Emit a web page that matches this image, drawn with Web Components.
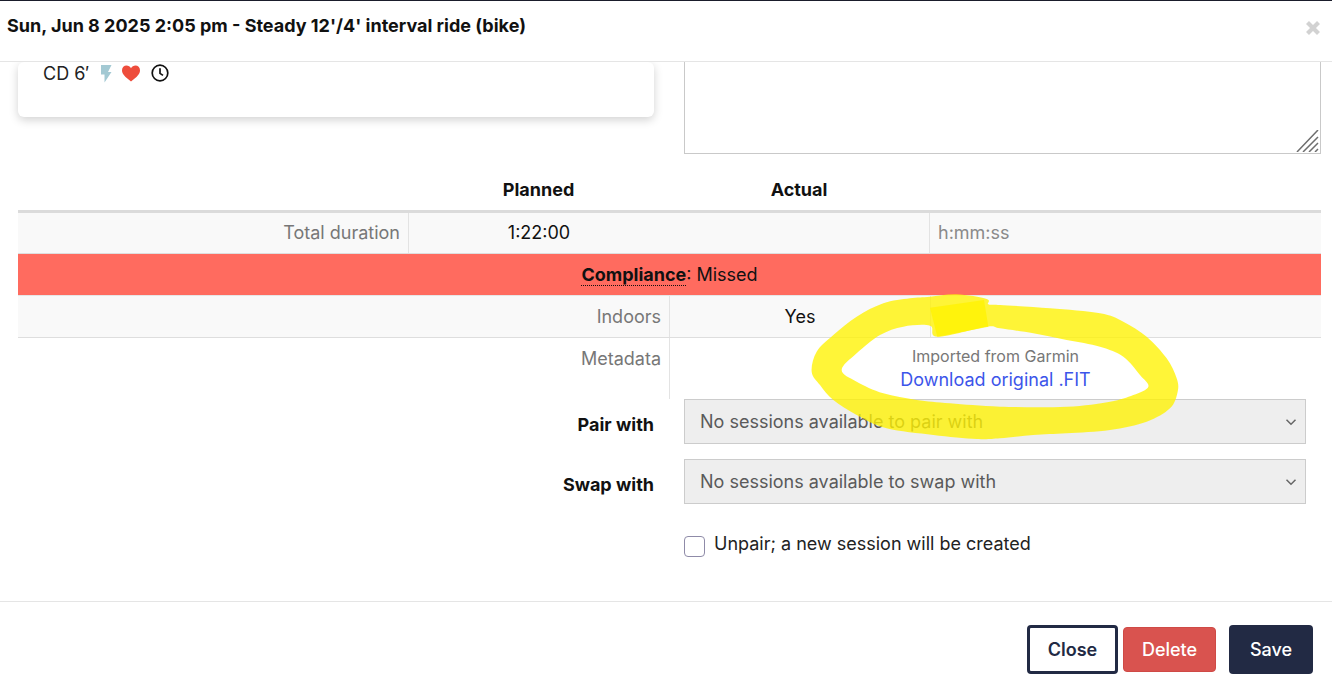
<!DOCTYPE html>
<html><head><meta charset="utf-8"><title>Session</title>
<style>
html,body{margin:0;height:100%;overflow:hidden;background:#fff}
body{font:18px/1.5 Inter,"Liberation Sans",sans-serif;color:#111}
</style></head><body>
<session-modal>
<modal-header slot="header">Sun, Jun 8 2025 2:05 pm - Steady 12'/4' interval ride (bike)</modal-header>
<top-panels></top-panels>
<data-table></data-table>
<select-row label="Pair with" text="No sessions available to pair with"></select-row>
<select-row label="Swap with" text="No sessions available to swap with"></select-row>
<unpair-check>Unpair; a new session will be created</unpair-check>
<modal-footer slot="footer"></modal-footer>
<yellow-scribble slot="overlay"></yellow-scribble>
</session-modal>
<script>
function def(name,html,init){customElements.define(name,class extends HTMLElement{constructor(){super();this.attachShadow({mode:'open'}).innerHTML=html;}connectedCallback(){if(init)init(this,this.shadowRoot);}});}
def('session-modal',`<style>:host{display:flex;flex-direction:column;position:relative;height:690px;width:1332px;overflow:hidden;background:#fff}
.body{flex:1;min-height:0;overflow:hidden;padding:0 0 0 18px;display:flex;flex-direction:column}
</style><slot name="header"></slot><div class="body"><slot></slot></div><slot name="footer"></slot><slot name="overlay"></slot>`);
def('modal-header',`<style>:host{display:flex;box-sizing:border-box;height:62px;border-top:1px solid #1a1d2b;border-bottom:1px solid #e5e5e5;padding:12px 7px 0;justify-content:space-between;flex:none}
.t{font-size:18px;font-weight:700;line-height:25px}
svg{margin:7px 4px 0 0;width:16px;height:16px;flex:none}</style>
<div class="t"><slot></slot></div><svg viewBox="0 0 16 16"><path d="M2.500 2.500L13.500 13.500M13.500 2.500L2.500 13.500" stroke="#d2d2d2" stroke-width="4.200"/></svg>`);
def('top-panels',`<style>:host{display:flex;height:92px;flex:none;width:1303px;justify-content:space-between;align-items:flex-start}
.card{box-sizing:border-box;width:636px;height:55px;background:#fff;border-radius:6px;box-shadow:0 3px 10px rgba(0,0,0,.18);padding:0 0 0 25px;display:flex;align-items:flex-start;font-size:18px;line-height:24px;color:#222}
.card span{margin-right:10px}
svg{display:block;margin-top:1px}
.ta{position:relative;box-sizing:border-box;width:637px;height:92px;border:1px solid #c9c9c9;border-top:0}
.ta svg{position:absolute;right:1px;bottom:1px;margin:0}</style>
<div class="card"><span>CD 6′</span>
<svg width="14" height="21" viewBox="0 0 14 21" style="margin-right:10px"><path d="M2 2H12.500L9 9H12.500L5.500 19.500V11.500H2z" fill="#a3c9d3"/></svg>
<svg width="20" height="21" viewBox="0 0 20 21" style="margin:1px 10px 0 -2px"><path d="M10 18.500C4 13.800 1 11 1 7.200 1 4.400 3.100 2.600 5.500 2.600c1.900 0 3.500 1 4.500 2.600 1-1.600 2.600-2.600 4.500-2.600C16.900 2.600 19 4.400 19 7.200c0 3.800-3 6.600-9 11.300z" fill="#ee4d3c"/></svg>
<svg width="18" height="21" viewBox="0 0 18 21"><circle cx="9" cy="10" r="7.800" fill="none" stroke="#111" stroke-width="1.700"/><path d="M9 5.200v5.200l3 2" fill="none" stroke="#111" stroke-width="1.700"/></svg>
</div>
<div class="ta"><svg width="24" height="22" viewBox="0 0 24 22"><path d="M2 22L23 0M8 22L23 7M14 22L23 13M20 22L23 19" stroke="#6e6e6e" stroke-width="1.500" fill="none"/></svg></div>`);
def('data-table',`<style>:host{display:block;flex:none;width:1303px}
.g{display:grid;grid-template-columns:390px 261px 260px 392px}
.head{height:59px;box-sizing:border-box;border-bottom:3px solid #dbdbdb;font-weight:700;align-items:end}
.head div{text-align:center;padding-bottom:8px;line-height:25px}
.row{height:41px;box-sizing:border-box;background:#f9f9f9;border-bottom:1px solid #dedede;line-height:40px}
.row>div{box-sizing:border-box;padding:0 8px;height:40px}
.lbl{text-align:right;color:#777}
.c{text-align:center}
.bl{border-left:1px solid #e3e3e3}
.alert{height:42px;box-sizing:border-box;background:#ff6b5f;text-align:center;line-height:42px;border-bottom:1px solid #e6e6e6}
.alert b{font-weight:700;border-bottom:1px dotted #111}
.meta{height:61px;background:#fff}
.meta .l2{padding:8px 8px 0;text-align:right;color:#777;line-height:25px}
.meta .m{border-left:1px solid #e3e3e3;text-align:center;padding-top:7px}
.small{font-size:16px;color:#777;line-height:22px;display:block}
a{color:#3c55ea;text-decoration:none;display:block;line-height:25px}
.ph{color:#8a8a8a}
.two{grid-template-columns:651px 261px 391px;height:42px;line-height:41px}
.two>div{height:41px}
.mm{grid-template-columns:651px 652px;display:grid}</style>
<div class="g head"><div></div><div>Planned</div><div>Actual</div><div></div></div>
<div class="g row"><div class="lbl">Total duration</div><div class="c bl">1:22:00</div><div></div><div class="bl ph">h:mm:ss</div></div>
<div class="alert"><b>Compliance</b>: Missed</div>
<div class="g row two"><div class="lbl">Indoors</div><div class="c bl">Yes</div><div class="bl"></div></div>
<div class="mm meta"><div class="l2">Metadata</div><div class="m"><span class="small">Imported from Garmin</span><a href="#">Download original .FIT</a></div></div>`);
def('select-row',`<style>:host{display:grid;grid-template-columns:636px 622px;column-gap:30px;flex:none;height:60px;align-items:start}
label{text-align:right;font-weight:700;line-height:25px;padding-top:13px}
.s{box-sizing:border-box;height:45px;background:#eee;border:1px solid #ccc;color:#5a5a5a;display:flex;align-items:center;justify-content:space-between;padding:0 8px 0 15px}
.s svg{flex:none}</style><label></label><div class="s"><span></span><svg width="12" height="8" viewBox="0 0 12 8"><path d="M1.500 1.700L6 6.200l4.500-4.500" fill="none" stroke="#666" stroke-width="1.500"/></svg></div>`,
(h,r)=>{r.querySelector('label').textContent=h.getAttribute('label');r.querySelector('span').textContent=h.getAttribute('text');});
def('unpair-check',`<style>:host{display:flex;flex:none;margin:12px 0 0 666px;align-items:center;gap:9px;height:26px;color:#222}
i{display:block;width:21px;height:21px;box-sizing:border-box;border:1px solid #8f8ba8;border-radius:4px;background:#fff;margin-top:4px}
span{line-height:26px}</style><i></i><span><slot></slot></span>`);
def('modal-footer',`<style>:host{display:flex;box-sizing:border-box;height:89px;flex:none;border-top:1px solid #e5e5e5;padding:23px 19px 0 0;justify-content:flex-end;align-items:flex-start}
button{font:600 18px Inter,sans-serif;border-radius:4px;box-sizing:border-box;height:49px;padding:0}
.c{width:91px;background:#fff;border:3px solid #222a44;color:#222a44;margin-right:5px}
.d{width:93px;height:45px;margin:2px 13px 0 0;background:#d9534f;border:1px solid #cf4a46;color:#fff;font-weight:500}
.s{width:84px;background:#222a44;border:0;color:#fff;font-weight:500}</style>
<button class="c">Close</button><button class="d">Delete</button><button class="s">Save</button>`);
const outer=[[450,35],[530,28],[620,42],[625,58],[660,60],[810,70],[960,85],[1030,110],[1100,155],[1160,220],[1190,280],[1193,320],[1170,370],[1100,410],[990,435],[860,445],[760,450],[660,460],[590,462],[460,450],[320,430],[230,390],[160,345],[120,300],[95,260],[110,200],[160,150],[230,95],[310,55],[390,40]];
const inner=[[185,255],[230,205],[300,150],[370,125],[450,122],[472,155],[620,125],[660,130],[760,145],[860,165],[960,185],[1030,215],[1080,270],[1105,305],[1060,330],[990,350],[860,365],[660,365],[510,355],[410,345],[310,325],[230,290]];
function smooth(p){const n=p.length,g=i=>p[(i+n)%n];let d='M'+p[0];for(let i=0;i<n;i++){const a=g(i-1),b=g(i),c=g(i+1),e=g(i+2);d+='C'+(b[0]+(c[0]-a[0])/6)+' '+(b[1]+(c[1]-a[1])/6)+' '+(c[0]-(e[0]-b[0])/6)+' '+(c[1]-(e[1]-b[1])/6)+' '+c[0]+' '+c[1];}return d+'Z';}
def('yellow-scribble',`<style>:host{position:absolute;left:780px;top:285px;width:420px;height:160px;pointer-events:none}svg{display:block}</style>
<svg width="420" height="160" viewBox="0 0 1260 480"><g fill="#fff200" fill-opacity=".78"><path fill-rule="evenodd" id="b"/><path d="M450 68L612 45L625 125L472 155Z"/></g></svg>`,
(h,r)=>{r.getElementById('b').setAttribute('d',smooth(outer)+smooth(inner));});
</script>
</body></html>
